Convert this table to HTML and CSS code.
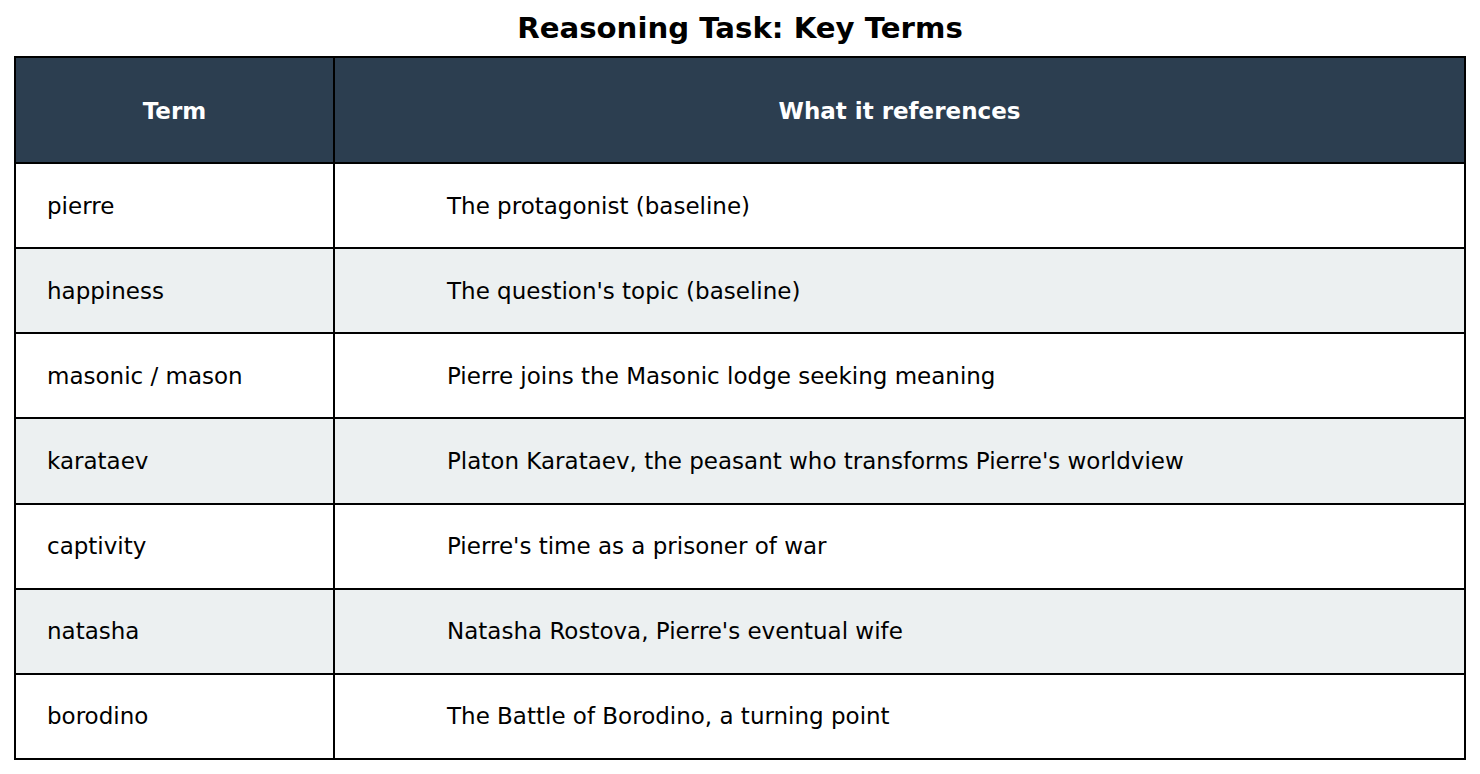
FILE: index.html
```html
<!DOCTYPE html>
<html>
<head>
<meta charset="utf-8">
<link rel="stylesheet" href="styles.css">
</head>
<body>
<div class="page">
  <h1 class="title">Reasoning Task: Key Terms</h1>
  <table class="terms">
    <thead>
      <tr class="head-row">
        <th class="col-term">Term</th>
        <th class="col-ref">What it references</th>
      </tr>
    </thead>
    <tbody>
      <tr><td class="term">pierre</td><td class="ref">The protagonist (baseline)</td></tr>
      <tr class="alt"><td class="term">happiness</td><td class="ref">The question's topic (baseline)</td></tr>
      <tr><td class="term">masonic / mason</td><td class="ref">Pierre joins the Masonic lodge seeking meaning</td></tr>
      <tr class="alt"><td class="term">karataev</td><td class="ref">Platon Karataev, the peasant who transforms Pierre's worldview</td></tr>
      <tr><td class="term">captivity</td><td class="ref">Pierre's time as a prisoner of war</td></tr>
      <tr class="alt"><td class="term">natasha</td><td class="ref">Natasha Rostova, Pierre's eventual wife</td></tr>
      <tr><td class="term">borodino</td><td class="ref">The Battle of Borodino, a turning point</td></tr>
    </tbody>
  </table>
</div>
</body>
</html>
```
FILE: styles.css
```css
html, body {
  margin: 0;
  padding: 0;
  background: #ffffff;
}
.page {
  width: 1480px;
  height: 774px;
  font-family: "DejaVu Sans", sans-serif;
  color: #000;
}
.title {
  margin: 0;
  height: 56px;
  line-height: 57px;
  font-size: 29.2px;
  font-weight: bold;
  text-align: center;
}
.terms {
  margin-left: 14px;
  width: 1452px;
  border-collapse: collapse;
  table-layout: fixed;
}
.terms th, .terms td {
  border: 2px solid #000;
  padding: 0;
}
.head-row th {
  height: 102px;
  padding-top: 2px;
  background: #2c3e50;
  color: #fff;
  font-size: 23px;
  font-weight: bold;
  text-align: center;
}
.col-term {
  width: 317px;
}
.terms td {
  height: 83.15px;
  font-size: 23px;
  vertical-align: middle;
}
.term {
  padding-left: 31px !important;
}
.ref {
  padding-left: 112px !important;
}
.alt td {
  background: #ecf0f1;
}
```
